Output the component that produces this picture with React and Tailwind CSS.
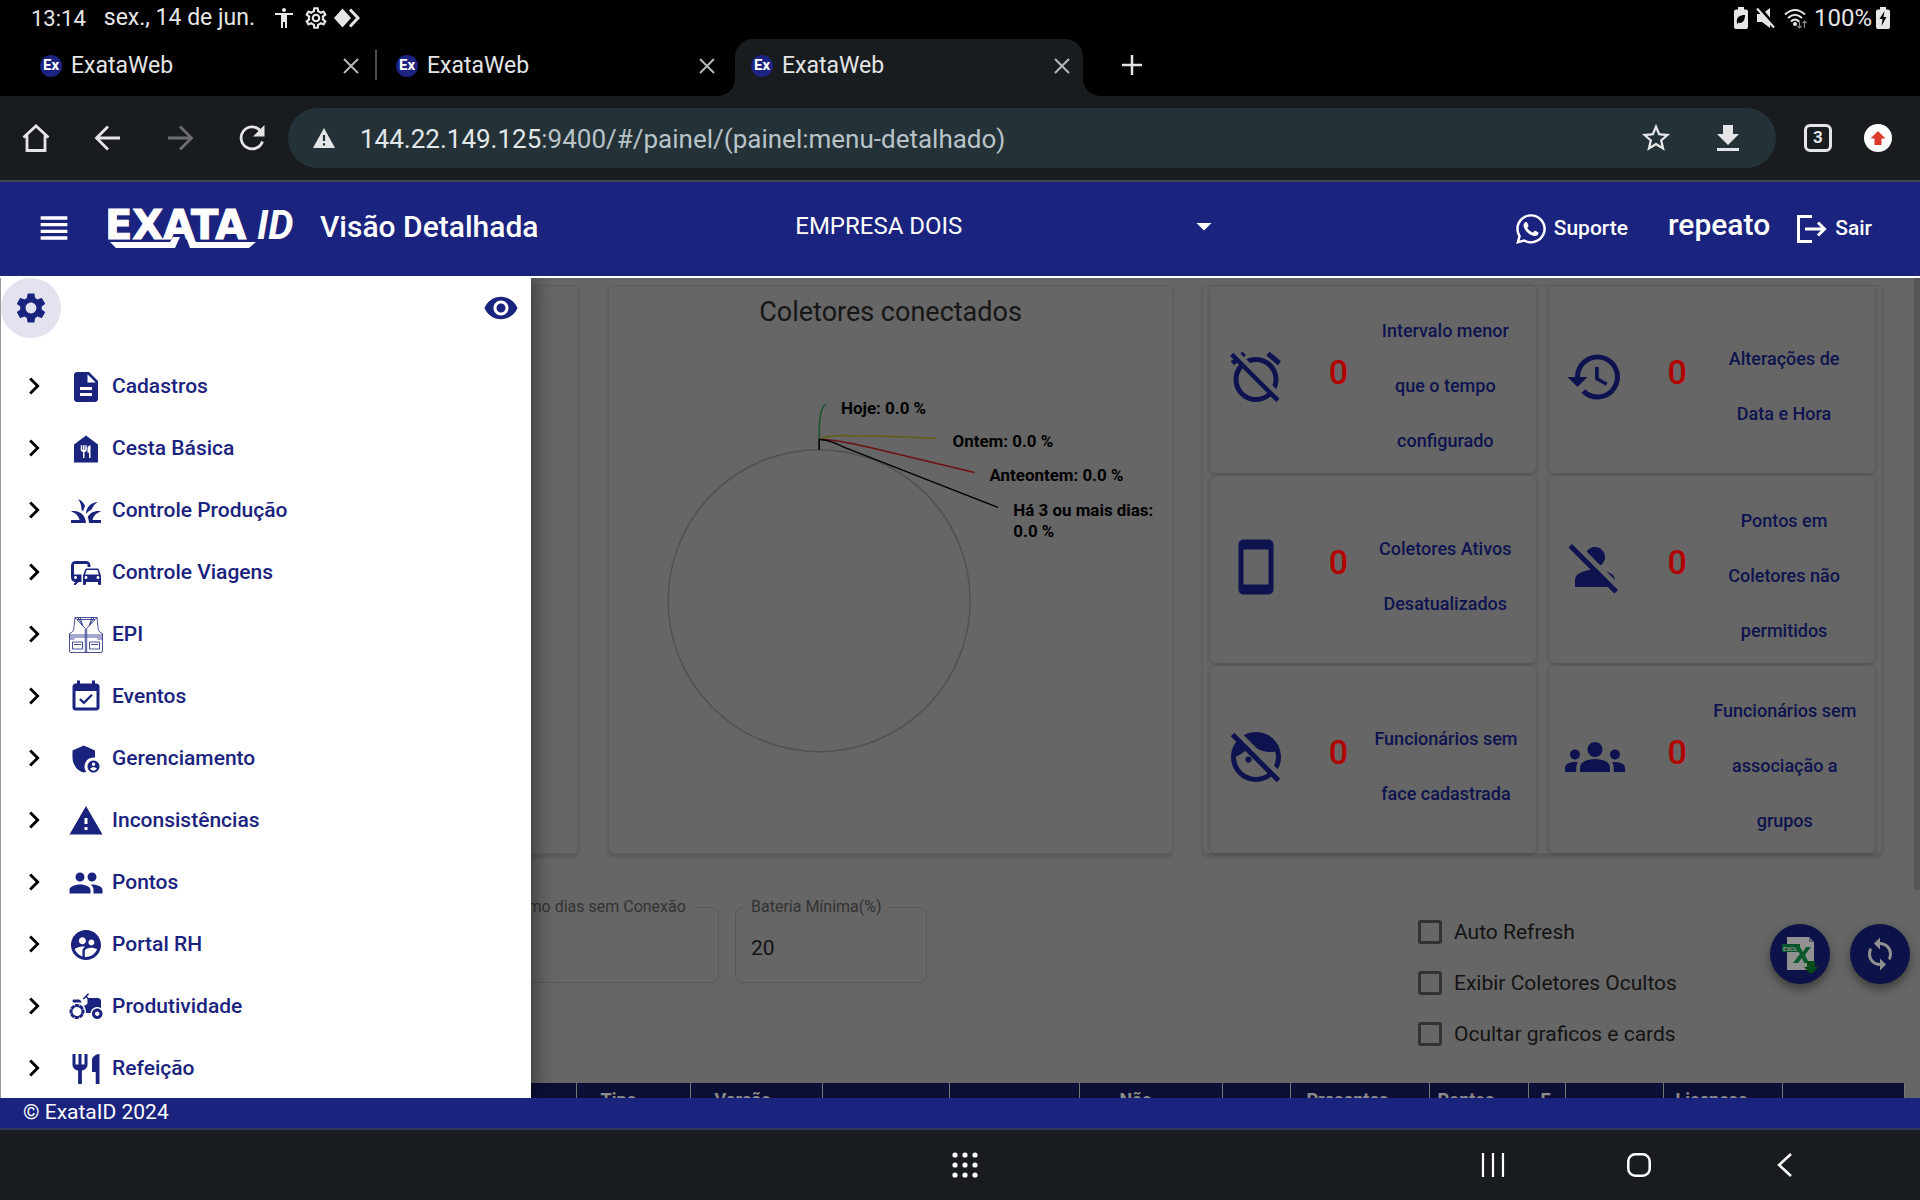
import React from "react";
import {
  MdSettings, MdVisibility, MdDescription, MdFoodBank, MdGrass, MdCommute,
  MdEventAvailable, MdAdminPanelSettings, MdWarning, MdPeople,
  MdSupervisedUserCircle, MdAgriculture, MdRestaurant, MdChevronRight,
  MdAlarmOff, MdHistory, MdSmartphone, MdPersonOff, MdFaceRetouchingOff,
  MdGroups, MdLoop, MdViewHeadline, MdArrowDropDown, MdAccessibility,
  MdOutlineSettings, MdStarOutline,
} from "react-icons/md";
import { FaWhatsapp } from "react-icons/fa";

function VestIcon({ className }) {
  return (
    <svg viewBox="0 0 36 36" className={className} fill="none" stroke="currentColor" strokeWidth="0.8">
      <path d="M7 0.5h22l1 9c0 4 1 5.500 4.500 7v17.500q0 1.500-1.500 1.500h-30q-1.500 0-1.500-1.500v-17.500c3.500-1.500 4.500-3 4.500-7z" />
      <path d="M7 0.500l10.300 11v24M29 0.500l-10.300 11v24M9 2.500h18M10 0.500l5 8.500M26 0.500l-5 8.500M12 0.500l2.500 7M24 0.500l-2.500 7" />
      <path d="M1.500 18h15.800M1.500 20h15.800M18.700 18h15.800M18.700 20h15.800M1.500 22h5M29.500 22h5" />
      <path d="M4.500 25h10v7h-10zM21.500 25h10v7h-10zM6 27.500h7M23 27.500h7" />
    </svg>
  );
}

const menu = [
  ["Cadastros", MdDescription],
  ["Cesta Básica", MdFoodBank],
  ["Controle Produção", MdGrass],
  ["Controle Viagens", MdCommute],
  ["EPI", VestIcon],
  ["Eventos", MdEventAvailable],
  ["Gerenciamento", MdAdminPanelSettings],
  ["Inconsistências", MdWarning],
  ["Pontos", MdPeople],
  ["Portal RH", MdSupervisedUserCircle],
  ["Produtividade", MdAgriculture],
  ["Refeição", MdRestaurant],
];

const cards = [
  [MdAlarmOff, ["Intervalo menor", "que o tempo", "configurado"]],
  [MdHistory, ["Alterações de", "Data e Hora"]],
  [MdSmartphone, ["Coletores Ativos", "Desatualizados"]],
  [MdPersonOff, ["Pontos em", "Coletores não", "permitidos"]],
  [MdFaceRetouchingOff, ["Funcionários sem", "face cadastrada"]],
  [MdGroups, ["Funcionários sem", "associação a", "grupos"]],
];

const columns = [
  ["", "w-[576px]"], ["Tipo", "w-[114px] pl-6"], ["Versão", "w-[132px] pl-6"],
  ["", "w-[127px]"], ["", "w-[130px]"], ["Não", "w-[143px] pl-10"],
  ["", "w-[68px]"], ["Presentes", "w-[139px] pl-4"], ["Pontos", "w-[99px] pl-2"],
  ["E", "w-[37px] pl-3"], ["", "w-[98px]"], ["Licenças", "w-[119px] pl-3"], ["", ""],
];

function BatteryIcon({ children }) {
  return (
    <svg viewBox="0 0 14 22" className="h-[22px] w-[14px]" fill="#e6e6e6">
      <path d="M4 0h6v2.500h2q2 0 2 2v15.500q0 2-2 2h-10q-2 0-2-2v-15.500q0-2 2-2h2z" />
      {children}
    </svg>
  );
}

function StatusBar() {
  return (
    <div className="flex h-9 shrink-0 items-center justify-between bg-black pr-[30px] pl-[31px] text-[#e6e6e6]">
      <div className="flex items-center">
        <span className="text-[22px]">13:14</span>
        <span className="ml-[18px] text-[23px]">sex., 14 de jun.</span>
        <MdAccessibility className="ml-[17px] size-6" />
        <MdOutlineSettings className="ml-[7px] size-[26px]" />
        <svg viewBox="0 0 28 24" className="ml-1 h-6 w-7">
          <path d="M9.500 2.500l8.500 9.500-8.500 9.500-8.500-9.500z" fill="#e6e6e6" />
          <path d="M17 3.500l8 8.500-8 8.500" fill="none" stroke="#e6e6e6" strokeWidth="3" />
        </svg>
      </div>
      <div className="flex items-center">
        <BatteryIcon>
          <path d="M3 16c-1-6 3-8 8-8 0 6-3 9-6.500 7.500l-1.500 2z" fill="#000" />
        </BatteryIcon>
        <svg viewBox="0 0 20 22" className="ml-2 h-[22px] w-5">
          <path d="M1 7h5l8-6v20l-8-6H1z" fill="#e6e6e6" />
          <path d="M3 0l17 20" stroke="#000" strokeWidth="3" />
          <path d="M1 1.500l17 19" stroke="#e6e6e6" strokeWidth="2.200" />
        </svg>
        <svg viewBox="0 0 24 22" className="ml-2 h-[22px] w-6" fill="none" stroke="#e6e6e6" strokeWidth="2">
          <path d="M1 7.500q10-9 20 0M4 11q7-6.500 14 0M7 14.500q4-4 8 0" />
          <circle cx="11" cy="17" r="1" fill="#e6e6e6" />
          <path d="M15.500 14v7m-2-2l2 2 2-2M20.500 21v-7m-2 2l2-2 2 2" stroke="#888" strokeWidth="1.200" />
        </svg>
        <span className="ml-[6px] text-[24px]">100%</span>
        <span className="ml-1">
          <BatteryIcon>
            <path d="M8.500 4l-5 8h3l-1 7 5-9h-3z" fill="#000" />
          </BatteryIcon>
        </span>
      </div>
    </div>
  );
}

function CloseIcon() {
  return (
    <svg viewBox="0 0 16 16" className="size-4" stroke="#b5b8ba" strokeWidth="2">
      <path d="M1 1l14 14M15 1L1 15" />
    </svg>
  );
}

function Tab({ active }) {
  return (
    <div className={active
      ? "relative flex h-[57px] w-[348px] items-center rounded-t-[18px] bg-[#191c1e] pr-[13px] pb-1 pl-4"
      : "flex h-[57px] w-[348px] items-center pr-[13px] pb-1 pl-4"}>
      {active && (
        <>
          <svg viewBox="0 0 20 20" className="absolute bottom-0 -left-5 size-5" fill="#191c1e">
            <path d="M0 20Q20 20 20 0V20z" />
          </svg>
          <svg viewBox="0 0 20 20" className="absolute -right-5 bottom-0 size-5" fill="#191c1e">
            <path d="M20 20Q0 20 0 0V20z" />
          </svg>
        </>
      )}
      <span className="flex size-[22px] items-center justify-center rounded-full bg-[#1c2380] text-[15px] font-bold text-white">Ex</span>
      <span className="ml-[9px] flex-1 pt-[2px] text-[23px] text-[#e3e5e6]">ExataWeb</span>
      <button type="button" aria-label="Fechar guia"><CloseIcon /></button>
    </div>
  );
}

function TabStrip() {
  return (
    <div className="flex h-[60px] shrink-0 items-end bg-black pl-6">
      <Tab />
      <span className="mx-[3px] mb-4 h-[30px] w-[2px] bg-[#4a4c4e]" />
      <Tab />
      <span className="w-[7px]" />
      <Tab active />
      <button type="button" aria-label="Nova guia" className="mb-[21px] ml-[39px]">
        <svg viewBox="0 0 20 20" className="size-5" stroke="#e3e5e6" strokeWidth="2.500">
          <path d="M10 0v20M0 10h20" />
        </svg>
      </button>
    </div>
  );
}

function BarButton({ label, wide, children }) {
  return (
    <button type="button" aria-label={label} className={wide ? "flex w-[72px] justify-center" : "flex w-[60px] justify-center"}>
      {children}
    </button>
  );
}

function Toolbar() {
  return (
    <div className="flex h-[86px] shrink-0 items-center border-b-2 border-[#3a4a48] bg-[#191c1e] pr-3">
      <BarButton label="Início" wide>
        <svg viewBox="0 0 28 28" className="size-7" fill="none" stroke="#e3e5e6" strokeWidth="2.800">
          <path d="M1.500 13.500L14 2l12.500 11.500M5 11.500V26.500H23V11.500" />
        </svg>
      </BarButton>
      <BarButton label="Voltar" wide>
        <svg viewBox="0 0 28 28" className="size-7" fill="none" stroke="#e3e5e6" strokeWidth="2.800">
          <path d="M26 14H3M14 2.500L2.500 14 14 25.500" />
        </svg>
      </BarButton>
      <BarButton label="Avançar" wide>
        <svg viewBox="0 0 28 28" className="size-7" fill="none" stroke="#6b6e70" strokeWidth="2.800">
          <path d="M2 14h23M14 2.500L25.500 14 14 25.500" />
        </svg>
      </BarButton>
      <BarButton label="Recarregar" wide>
        <svg viewBox="0 0 28 28" className="size-7" fill="none" stroke="#e3e5e6" strokeWidth="2.800">
          <path d="M24.500 17.500A11 11 0 1 1 22 6.200" />
          <path d="M26.500 1v11.500H15z" fill="#e3e5e6" stroke="none" />
        </svg>
      </BarButton>
      <div className="flex h-[60px] flex-1 items-center rounded-full bg-[#243238] pr-3 pl-[25px]">
        <svg viewBox="0 0 22 20" className="h-5 w-[22px]">
          <path d="M11 0l11 20H0z" fill="#e3e5e6" />
          <path d="M11 7v6M11 15.200v2.300" stroke="#243238" strokeWidth="2.200" />
        </svg>
        <div className="ml-[25px] flex-1 pt-[2px] text-[26px] text-[#b9c3c7]">
          <span className="text-[#e3e8ea]">144.22.149.125</span>:9400/#/painel/(painel:menu-detalhado)
        </div>
        <BarButton label="Favoritar" wide><MdStarOutline className="size-[34px] text-[#e3e5e6]" /></BarButton>
        <BarButton label="Baixar" wide>
          <svg viewBox="0 0 22 28" className="h-7 w-[22px]" fill="#e3e5e6">
            <path d="M6 1h10v9h6l-11 11L0 10h6zM0 24h22v3H0z" />
          </svg>
        </BarButton>
      </div>
      <span className="w-3" />
      <BarButton label="Guias abertas">
        <span className="flex size-7 items-center justify-center rounded-md border-[3px] border-[#e3e5e6] text-[17px] font-bold text-[#e3e5e6]">3</span>
      </BarButton>
      <BarButton label="Atualização">
        <svg viewBox="0 0 28 28" className="size-7">
          <circle cx="14" cy="14" r="14" fill="#fff" />
          <path d="M14 7l7.500 7.500H17.500V21h-7v-6.500H6.500z" fill="#dc3a2b" />
        </svg>
      </BarButton>
    </div>
  );
}

function Logo() {
  return (
    <svg viewBox="0 0 192 42" className="h-[42px] w-48" fill="#fff" role="img" aria-label="EXATA ID">
      <text x="-3" y="32" fontFamily="'DejaVu Sans', sans-serif" fontWeight="700" fontSize="40" stroke="#fff" strokeWidth="1">EXATA</text>
      <text x="149" y="32" fontFamily="Roboto, sans-serif" fontWeight="700" fontStyle="italic" fontSize="40">ID</text>
      <path d="M2 35H62L65 30H72L67 41H8z" />
      <path d="M148 35H88L85 30H78L82 41H141z" />
    </svg>
  );
}

function Header() {
  return (
    <header className="flex h-24 shrink-0 items-center border-b-2 border-white bg-[#1a237e] pr-12 text-white">
      <div className="flex w-[42%] items-center pb-[2px] pl-[34px]">
        <button type="button" aria-label="Menu"><MdViewHeadline className="size-10" /></button>
        <span className="ml-[34px]"><Logo /></span>
        <h1 className="ml-5 pb-[2px] text-[30px] leading-9 font-medium">Visão Detalhada</h1>
      </div>
      <div className="relative mb-[6px] flex w-[436px] items-center">
        <select aria-label="Empresa" className="w-full appearance-none bg-transparent px-[9px] text-[24px] outline-none">
          <option>EMPRESA DOIS</option>
        </select>
        <MdArrowDropDown className="pointer-events-none absolute right-0 size-9" />
      </div>
      <div className="ml-auto flex items-center">
        <a href="#suporte" className="flex items-center gap-[6px] text-[21px] font-medium">
          <FaWhatsapp className="size-[34px]" />Suporte
        </a>
        <span className="mb-2 ml-10 text-[30px] leading-9 font-medium">repeato</span>
        <a href="#sair" className="ml-[27px] flex items-center gap-2 text-[21px] font-medium">
          <svg viewBox="0 0 30 28" className="h-7 w-[30px]" fill="none" stroke="#fff" strokeWidth="3">
            <path d="M15 1.500H1.500v25H15M8 14h20M21 7.500l6.500 6.500-6.500 6.500" />
          </svg>
          Sair
        </a>
      </div>
    </header>
  );
}

function ConnectedChart() {
  return (
    <svg viewBox="608 345 566 508" className="w-full" fontFamily="Roboto, sans-serif" fontWeight="700" fontSize="17" fill="#000">
      <g fill="none" strokeWidth="1.500">
        <circle cx="819" cy="600.700" r="151.600" stroke="#757575" />
        <path d="M819 439V432Q819.500 405 826 404" stroke="#1f7a35" />
        <path d="M819 439Q826 434 850 435Q890 435 937 438" stroke="#8c8a1a" />
        <path d="M819 439Q832 438 870 447L975 472" stroke="#a01818" />
        <path d="M819 449.500V439Q826 438 845 447L998.500 507" stroke="#000" />
      </g>
      <text x="841" y="413">Hoje: 0.0 %</text>
      <text x="953" y="446">Ontem: 0.0 %</text>
      <text x="990" y="481">Anteontem: 0.0 %</text>
      <text x="1014" y="516">Há 3 ou mais dias:</text>
      <text x="1014" y="537">0.0 %</text>
    </svg>
  );
}

const panel = "rounded-md border border-[#848787] bg-[#929292] shadow-[0_3px_3px_rgba(0,0,0,0.12)]";

function Card({ icon: Icon, lines }) {
  return (
    <article className="grid h-[187px] grid-cols-[92px_72px_1fr] items-center rounded-md bg-[#929292] pb-[5px] shadow-[0_1px_4px_rgba(0,0,0,0.22)]">
      <Icon className="size-[60px] justify-self-center text-[#151c72]" />
      <span className="pb-[10px] text-center text-[34px] leading-10 font-medium text-[#ff0000]">0</span>
      <p className="flex flex-col items-center pt-[17px] pr-5 text-[18px] leading-[55px] font-medium whitespace-nowrap text-[#151c72]">
        {lines.map((line) => <span key={line}>{line}</span>)}
      </p>
    </article>
  );
}

function Field({ id, label, value, className }) {
  return (
    <fieldset className={className}>
      <legend className="ml-[7px] px-2 text-[16px] leading-5 text-[#4a4a4a]"><label htmlFor={id}>{label}</label></legend>
      <input id={id} defaultValue={value} className="w-full bg-transparent px-[15px] pt-[19px] text-[21px] leading-6 text-[#1c1c1c] outline-none" />
    </fieldset>
  );
}

function Check({ id, label }) {
  return (
    <div className="flex h-[51px] items-start gap-3">
      <input id={id} type="checkbox" className="size-6 appearance-none rounded-[3px] border-[3px] border-[#484848]" />
      <label htmlFor={id} className="text-[21px] leading-6 text-[#1c1c1c]">{label}</label>
    </div>
  );
}

function Dashboard() {
  return (
    <div className="flex h-full">
      <div className="min-w-0 flex-1 pt-[7px]">
        <div className="grid grid-cols-[566fr_566fr_681fr] gap-[29px] pr-[31px] pl-[13px]">
          <section className={panel} />
          <section className={panel}>
            <h2 className="pt-2 pb-4 text-center text-[27px] leading-9 text-[#222]">Coletores conectados</h2>
            <ConnectedChart />
          </section>
          <section className={`${panel} grid grid-cols-2 content-start gap-x-[13px] gap-y-[3px] px-[7px]`}>
            {cards.map(([icon, lines], i) => <Card key={i} icon={icon} lines={lines} />)}
          </section>
        </div>

        <div className="mt-[43px] flex h-[186px] items-start pr-1 pl-[477px]">
          <Field id="dias" label="Máximo dias sem Conexão" value="" className="h-[86px] w-[242px] rounded-lg border border-[#7e7e7e]" />
          <Field id="bateria" label="Bateria Mínima(%)" value="20" className="ml-4 h-[86px] w-48 rounded-lg border border-[#7e7e7e]" />
          <div className="mt-[23px] ml-auto w-[352px]">
            <Check id="auto" label="Auto Refresh" />
            <Check id="ocultos" label="Exibir Coletores Ocultos" />
            <Check id="graficos" label="Ocultar graficos e cards" />
          </div>
          <div className="mt-[27px] flex gap-5">
            <button type="button" aria-label="Exportar para Excel" className="flex size-[60px] items-center justify-center rounded-full bg-[#131a68] shadow-[0_5px_10px_rgba(0,0,0,0.4)]">
              <svg viewBox="0 0 38 38" className="size-[38px]">
                <path d="M6 2h22l5 5v28H6z" fill="#d0d0d0" />
                <path d="M28 2v5h5z" fill="#8a8aa0" />
                <path d="M1 9h18v8H1z" fill="#0c7a3e" />
                <text x="2" y="15.500" fontFamily="Roboto, sans-serif" fontWeight="700" fontSize="6" fill="#d0d0d0">EXCEL</text>
                <path d="M14 12h5l3 5 3-5h5l-6 8 4 8h-5l-2-5-4 5h-5l7-9z" fill="#0c8040" />
                <path d="M26 26h8v6h3l-7 8-7-8h3z" fill="#0c6a26" />
              </svg>
            </button>
            <button type="button" aria-label="Atualizar" className="flex size-[60px] items-center justify-center rounded-full bg-[#131a68] shadow-[0_5px_10px_rgba(0,0,0,0.4)]">
              <MdLoop className="size-9 text-[#d0d0d0]" />
            </button>
          </div>
        </div>

        <div className="pr-[9px]">
          <table className="w-full table-fixed border-collapse bg-[#12154e] text-left text-[18px] text-[#c8c8c8]">
            <thead>
              <tr>
                {columns.map(([name, cls], i) => (
                  <th key={i} className={`${cls} h-12 border-r border-[#a8a8a8] pt-[7px] align-top leading-5 font-bold`}>{name}</th>
                ))}
              </tr>
            </thead>
          </table>
        </div>
      </div>
      <div className="h-[612px] w-[6px] bg-[#7c7c7c]" />
    </div>
  );
}

function Drawer() {
  return (
    <nav className="absolute inset-y-0 left-0 w-[531px] overflow-hidden border-l border-[#9a9a9a] bg-white shadow-[4px_0_18px_rgba(0,0,0,0.45)]">
      <div className="flex h-[77px] items-start justify-between pr-3">
        <button type="button" aria-label="Configurações" className="flex size-[60px] items-center justify-center rounded-full bg-[#e3e3ef]">
          <MdSettings className="size-9 text-[#1a237e]" />
        </button>
        <button type="button" aria-label="Ocultar menu" className="mt-3"><MdVisibility className="size-9 text-[#1a237e]" /></button>
      </div>
      <ul>
        {menu.map(([name, Icon]) => (
          <li key={name}>
            <button type="button" className="flex h-[62px] w-full items-center pl-4 text-[21px] font-medium text-[#1a237e]">
              <MdChevronRight className="size-[34px] text-black" />
              <span className="ml-[17px] flex items-center gap-2 pt-[2px]">
                <Icon className="size-9" />
                {name}
              </span>
            </button>
          </li>
        ))}
      </ul>
    </nav>
  );
}

function SystemNav() {
  return (
    <div className="grid h-[72px] shrink-0 grid-cols-[1fr_auto_1fr] items-center border-t-2 border-[#30395a] bg-[#191c1e] pl-[10px]">
      <button type="button" aria-label="Aplicativos" className="col-start-2">
        <svg viewBox="0 0 26 26" className="size-[26px]" fill="#fff">
          {[3, 13, 23].map((y) => [3, 13, 23].map((x) => <circle key={`${x}-${y}`} cx={x} cy={y} r="2.600" />))}
        </svg>
      </button>
      <div className="flex items-center justify-end gap-[122px] pr-[123px]">
        <button type="button" aria-label="Recentes">
          <svg viewBox="0 0 24 24" className="size-6" stroke="#fff" strokeWidth="2.200"><path d="M2 0v24M12 0v24M22 0v24" /></svg>
        </button>
        <button type="button" aria-label="Tela inicial">
          <svg viewBox="0 0 24 24" className="size-6" fill="none" stroke="#fff" strokeWidth="2.500"><rect x="1.300" y="1.300" width="21.400" height="21.400" rx="7" /></svg>
        </button>
        <button type="button" aria-label="Voltar">
          <svg viewBox="0 0 24 24" className="size-6" fill="none" stroke="#fff" strokeWidth="2.500"><path d="M18 1L6 12l12 11" /></svg>
        </button>
      </div>
    </div>
  );
}

export default function App() {
  return (
    <div className="flex h-screen flex-col overflow-hidden bg-black font-[Roboto,sans-serif]">
      <StatusBar />
      <TabStrip />
      <Toolbar />
      <Header />
      <main className="relative min-h-0 flex-1 overflow-hidden bg-[#929292]">
        <Dashboard />
        <div className="absolute inset-0 bg-black/30" />
        <Drawer />
      </main>
      <footer className="flex h-[30px] shrink-0 items-center bg-[#1a237e] pl-[23px] text-[21px] text-white">© ExataID 2024</footer>
      <SystemNav />
    </div>
  );
}
